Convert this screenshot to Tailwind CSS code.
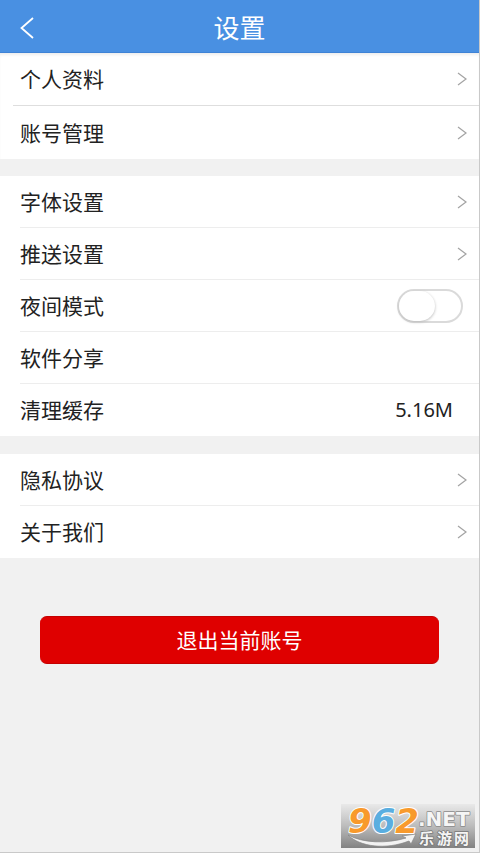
<!DOCTYPE html>
<html lang="zh-CN">
<head>
<meta charset="UTF-8">
<meta name="viewport" content="width=device-width, initial-scale=1">
<title>设置</title>
<script src="https://cdn.jsdelivr.net/npm/@tailwindcss/browser@4"></script>
</head>
<body class="bg-[#f1f1f1] font-['Noto_Sans','Noto_Sans_CJK_SC',sans-serif] text-[21px] leading-8 text-[#222]">
<svg class="hidden" aria-hidden="true">
  <symbol id="chevron" viewBox="0 0 10 14"><path d="M1 1 9 7 1 13" fill="none" stroke="#a3a3a3" stroke-width="1.2"/></symbol>
</svg>
<div class="relative flex min-h-screen flex-col border-r border-b border-[#c9c9c9]">
  <header class="grid h-[53px] grid-cols-[1fr_auto_1fr] items-center border-b border-[#3f83d6] bg-[#4990e2] px-5 pt-1 text-white">
    <button type="button" aria-label="返回" class="flex h-8 w-8 items-center">
      <svg class="h-[22px] w-[14px]" viewBox="0 0 14 22" fill="none" stroke="currentColor" stroke-width="1.8"><path d="M13 1 1.5 11 13 21"/></svg>
    </button>
    <h1 class="text-[26px]">设置</h1>
  </header>

  <main>
    <nav class="bg-white shadow-[inset_0_3px_3px_-1px_#eee]">
      <a href="#" class="flex h-[53px] items-center pl-[13px]">
        <span class="flex h-full flex-1 items-center justify-between border-b border-[#dedede] pr-3 pl-[7px]">个人资料<svg class="h-[14px] w-[10px]"><use href="#chevron"/></svg></span>
      </a>
      <a href="#" class="flex h-[53px] items-center justify-between pr-3 pl-5">账号管理<svg class="h-[14px] w-[10px]"><use href="#chevron"/></svg></a>
    </nav>

    <section class="mt-[17px] bg-white pl-5">
      <a href="#" class="flex h-[52px] items-center justify-between border-b border-[#ededed] pr-3">字体设置<svg class="h-[14px] w-[10px]"><use href="#chevron"/></svg></a>
      <a href="#" class="flex h-[52px] items-center justify-between border-b border-[#ededed] pr-3">推送设置<svg class="h-[14px] w-[10px]"><use href="#chevron"/></svg></a>
      <div class="flex h-[52px] items-center justify-between border-b border-[#ededed] pr-4">
        <label for="night">夜间模式</label>
        <input id="night" type="checkbox" role="switch" class="h-[34px] w-[66px] appearance-none rounded-full border-2 border-[#dadada] bg-white before:block before:h-[30px] before:w-9 before:rounded-full before:bg-white before:shadow-[0_1px_3px_#bbb] checked:bg-[#4990e2] checked:before:translate-x-[26px]">
      </div>
      <a href="#" class="flex h-[52px] items-center border-b border-[#ededed]">软件分享</a>
      <button type="button" class="flex h-[52px] w-full items-center justify-between pr-[26px]">清理缓存<span class="text-[20px]">5.16M</span></button>
    </section>

    <nav class="mt-[18px] bg-white pl-5">
      <a href="#" class="flex h-[52px] items-center justify-between border-b border-[#ededed] pr-3">隐私协议<svg class="h-[14px] w-[10px]"><use href="#chevron"/></svg></a>
      <a href="#" class="flex h-[52px] items-center justify-between pr-3">关于我们<svg class="h-[14px] w-[10px]"><use href="#chevron"/></svg></a>
    </nav>

    <div class="px-10 pt-[58px]">
      <button type="button" class="h-12 w-full rounded-[7px] border-y border-[#c40000] bg-[#df0000] text-white">退出当前账号</button>
    </div>
  </main>

  <svg class="absolute right-1 bottom-1 h-[44px] w-[134px] overflow-visible" viewBox="0 0 134 44" role="img" aria-label="962.NET 乐游网">
    <defs>
      <linearGradient id="plate" x2="0" y2="1"><stop stop-color="#e9e9e9"/><stop offset=".5" stop-color="#bcbcbc"/><stop offset="1" stop-color="#828282"/></linearGradient>
    </defs>
    <path d="M0 0h134v44H0z" fill="url(#plate)"/>
    <path d="M7 31c15 8 38 9 58 3l-4-2 14-2-5 10-2-3C45 46 19 43 7 31z" fill="#f2f2f2" stroke="#858585" stroke-width=".7"/>
    <g font-family="DejaVu Sans" font-weight="bold" stroke-linejoin="round" paint-order="stroke">
      <text x="7" y="29" font-size="34" font-style="italic" stroke="#fff" stroke-width="2"><tspan fill="#f89a2c">9</tspan><tspan fill="#5aaee0">6</tspan><tspan fill="#f89a2c">2</tspan></text>
      <text x="77" y="22" font-size="20" fill="#f5f5f5" stroke="#8b8b8b" stroke-width="1.5">.NET</text>
    </g>
    <g font-family="Noto Sans CJK SC" font-size="15" font-weight="bold" fill="#f5f5f5" stroke="#777" stroke-width="1.5" paint-order="stroke"><text x="78" y="40">乐</text><text x="96" y="40">游</text><text x="113" y="40">网</text></g>
  </svg>
</div>
</body>
</html>
